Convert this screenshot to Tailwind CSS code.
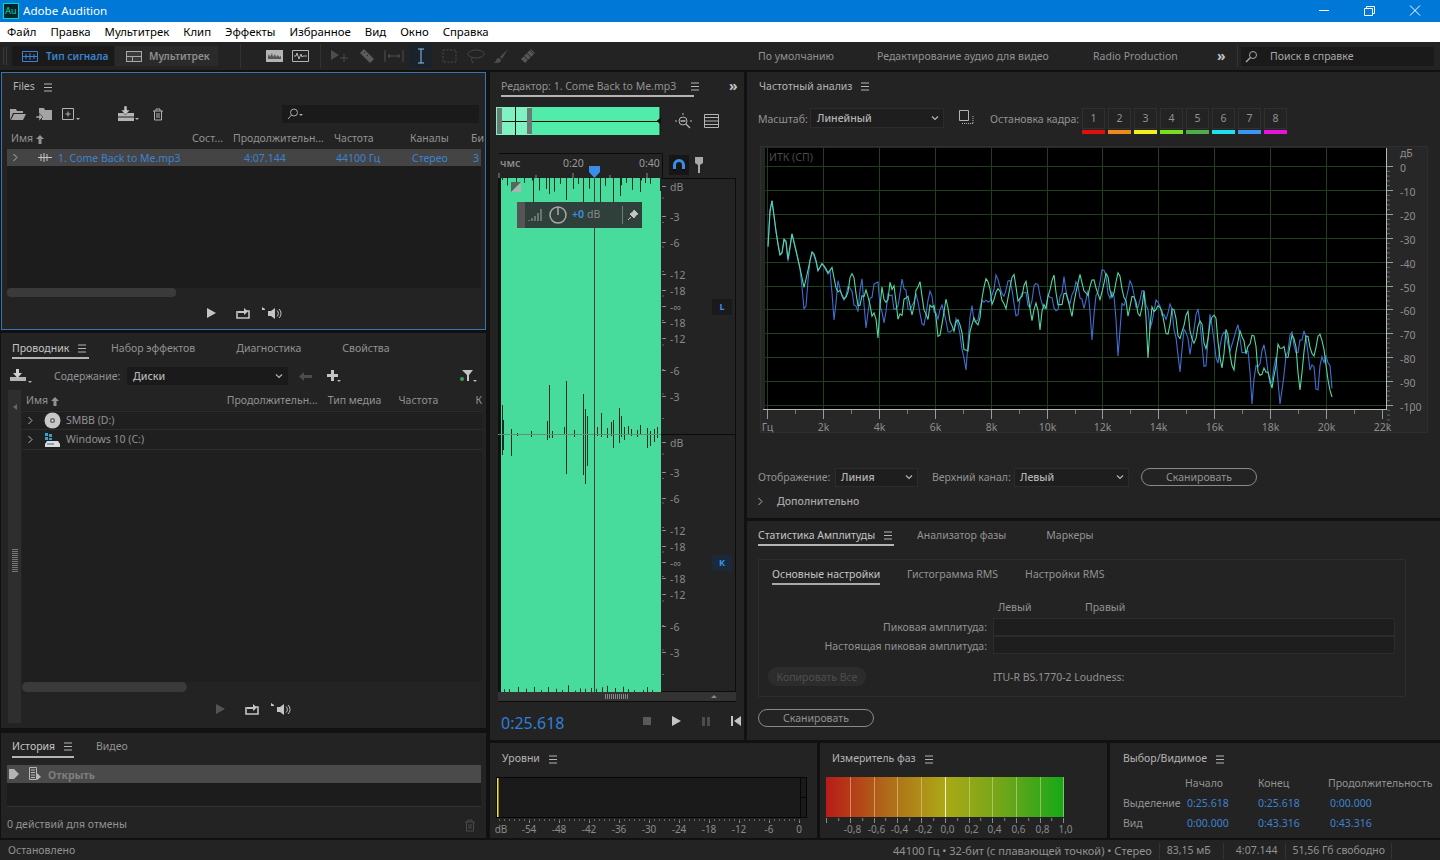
<!DOCTYPE html>
<html lang="ru">
<head>
  <meta charset="UTF-8">
  <title>Adobe Audition</title>
  <script src="https://cdn.jsdelivr.net/npm/@tailwindcss/browser@4"></script>
</head>
<body class="bg-[#111111] font-['Noto_Sans',sans-serif] text-[10.5px] text-[#929292]">

  <!-- shared icons -->
  <svg class="absolute w-0 h-0">
    <symbol id="burger" viewBox="0 0 10 9"><path d="M1 1h8M1 4.500h8M1 8h8" stroke="#b4b4b4" fill="none"/></symbol>
    <symbol id="chev" viewBox="0 0 10 10"><path d="M2 3.500l3 3 3-3" stroke="#b4b4b4" stroke-width="1.2" fill="none"/></symbol>
    <symbol id="expand" viewBox="0 0 7 9"><path d="M1.500 1l3.500 3.500L1.500 8" stroke="#b4b4b4" fill="none"/></symbol>
    <symbol id="sort" viewBox="0 0 8 9"><path d="M4 0l4 4H5.500v5h-3V4H0z" fill="#929292"/></symbol>
    <symbol id="play" viewBox="0 0 12 12"><path d="M2 1l9 5-9 5z" fill="#c4c4c4"/></symbol>
    <symbol id="loop" viewBox="0 0 16 14"><path d="M2 5v7h12V5h-3" stroke="#c4c4c4" stroke-width="1.6" fill="none"/><path d="M3 7V5h6V2l4 3.500L9 9V7z" fill="#c4c4c4"/></symbol>
    <symbol id="speaker" viewBox="0 0 22 14"><path d="M1 1l3 2v1H1z" fill="#c4c4c4"/><path d="M7 5h3l4-3v11l-4-3H7z" fill="#c4c4c4"/><path d="M16 4.500a4 4 0 0 1 0 6M18 3a6 6 0 0 1 0 9" stroke="#c4c4c4" fill="none"/></symbol>
    <symbol id="trash" viewBox="0 0 12 13"><path d="M1 3h10M4 3V1h4v2M2.500 3v9h7V3M5 5v5M7 5v5" stroke="currentColor" fill="none"/></symbol>
  </svg>

  <div class="w-[1440px] h-[860px] flex flex-col overflow-hidden">

    <!-- title bar -->
    <div class="h-[22px] bg-[#0078d7] flex items-center text-white text-[11.6px]">
      <div class="ml-[3px] w-[16px] h-[16px] bg-[#00262b] border border-[#00d8b4] text-[#00d8b4] text-[9px] leading-[14px] text-center">Au</div>
      <span class="ml-[4px]">Adobe Audition</span>
      <svg class="ml-auto" width="125" height="22" viewBox="1315 0 125 22" fill="none" stroke="#fff">
        <path d="M1319 10.500h10M1364.500 8.500h8v7h-8zM1366.500 8.500v-2h8v7h-2M1410 5.500l10 10M1420 5.500l-10 10"/>
      </svg>
    </div>

    <!-- menu -->
    <div class="h-[20px] bg-white flex items-center gap-[14px] pl-[7px] text-[11.4px] text-black">
      <span>Файл</span><span>Правка</span><span>Мультитрек</span><span>Клип</span><span>Эффекты</span><span>Избранное</span><span>Вид</span><span>Окно</span><span>Справка</span>
    </div>

    <!-- toolbar -->
    <div class="h-[28px] bg-[#232323] flex items-center shrink-0 whitespace-nowrap">
      <div class="ml-[3px] w-[4px] h-[18px] border-x border-[#3a3a3a]"></div>
      <div class="ml-[5px] w-[102px] h-[20px] bg-[#1a1a1a] flex items-center pl-[10px] gap-[8px] font-semibold text-[10.2px] text-[#3d82d0]">
        <svg width="16" height="11" viewBox="0 0 16 11" fill="none" stroke="#3d82d0"><path d="M.5.5h15v10H.5zM.5 5.500h15M4 3v5M8 2v7M12 3v5"/></svg>
        <span class="mt-[2px]">Тип сигнала</span>
      </div>
      <div class="ml-[1px] w-[103px] h-[20px] bg-[#2a2a2a] flex items-center pl-[11px] gap-[7px] font-semibold text-[10.2px] text-[#8e8e8e]">
        <svg width="16" height="11" viewBox="0 0 16 11"><path d="M0 0h16v11H0z" fill="#a8a8a8"/><path d="M1 1h14v4H1zM1 6h5v4H1zM7 6h8v4H7z" fill="#3a3a3a"/></svg>
        <span class="mt-[2px]">Мультитрек</span>
      </div>
      <div class="ml-[22px] w-px h-[24px] bg-[#333]"></div>
      <svg class="ml-[25px]" width="17" height="12" viewBox="0 0 17 12"><path d="M0 0h17v12H0z" fill="#b4b4b4"/><path d="M2 9V6l1-2 1 3 2-4 1 4 2-3 1 3 2-2 1 2 2-1v3z" fill="#555"/></svg>
      <svg class="ml-[9px]" width="17" height="12" viewBox="0 0 17 12" fill="none" stroke="#b4b4b4"><path d="M.5.5h16v11H.5z"/><path d="M2 6h2l1-3 2 6 2-5 1 3 1-1h4"/></svg>
      <div class="ml-[11px] w-px h-[24px] bg-[#333]"></div>
      <svg class="ml-[9px]" width="20" height="16" viewBox="0 0 20 16"><path d="M1 2l8 5-8 5z" fill="#4d4d4d"/><path d="M14 6v8M10 10h8" stroke="#4d4d4d"/></svg>
      <svg class="ml-[8px]" width="18" height="18" viewBox="0 0 18 18"><path d="M2 6l4-4 10 10-4 4z" fill="#5a5a5a"/><path d="M6 5l1 1M9 8l1 1" stroke="#232323"/></svg>
      <svg class="ml-[8px]" width="20" height="14" viewBox="0 0 20 14" fill="none" stroke="#505050"><path d="M1 1v12M19 1v12M4 7h12M4 7l2-2M4 7l2 2M16 7l-2-2M16 7l-2 2"/></svg>
      <div class="ml-[5px] w-[23px] h-[24px] bg-[#1a222b] flex items-center justify-center">
        <svg width="8" height="16" viewBox="0 0 8 16" fill="none" stroke="#8cc0e8"><path d="M1 1h6M1 15h6M4 1v14"/></svg>
      </div>
      <svg class="ml-[10px]" width="15" height="14" viewBox="0 0 15 14" fill="none" stroke="#4a4a4a" stroke-dasharray="2 1.500"><path d="M1 1h13v12H1z"/></svg>
      <svg class="ml-[10px]" width="18" height="15" viewBox="0 0 18 15" fill="none" stroke="#4a4a4a"><path d="M9 1c5 0 8 2 8 4s-4 4-8 4-8-2-8-4 4-4 8-4zM5 9c-1 2 0 3 1 5"/></svg>
      <svg class="ml-[8px]" width="16" height="16" viewBox="0 0 16 16"><path d="M15 1L7 9l2 2 6-10zM6 10c-2 0-3 1-3 3l-2 2c3 0 7 0 7-3z" fill="#4d4d4d"/></svg>
      <svg class="ml-[10px]" width="18" height="18" viewBox="0 0 18 18"><path d="M2 12L12 2l4 4L6 16z" fill="#555"/><path d="M5 9l4 4M8 6l4 4M11 3l4 4" stroke="#2a2a2a"/></svg>

      <span class="ml-[221px] mt-[2px] w-[119px]">По умолчанию</span>
      <span class="mt-[2px] w-[216px]">Редактирование аудио для видео</span>
      <span class="mt-[2px] w-[124px]">Radio Production</span>
      <span class="w-[12px] text-[#c4c4c4] font-bold text-[14px] leading-[14px]">»</span>
      <div class="ml-[8px] w-px h-[22px] bg-[#333]"></div>
      <div class="ml-[3px] w-[193px] h-[19px] bg-[#1a1a1a] flex items-center pl-[3px] gap-[12px]">
        <svg width="14" height="13" viewBox="0 0 14 13" fill="none" stroke="#a8a8a8"><circle cx="9" cy="5" r="3.500"/><path d="M6.500 7.500L2 12" stroke-width="1.500"/></svg>
        <span class="mt-[2px] text-[#a8a8a8]">Поиск в справке</span>
      </div>
    </div>

    <!-- workspace -->
    <div class="h-[770px] flex pt-[2px] shrink-0">

      <!-- left column -->
      <div class="w-[487px] pl-[1px] flex flex-col shrink-0">

        <!-- Files -->
        <div class="w-[485px] h-[258px] border border-[#3a74ae] bg-[#232323] flex flex-col shrink-0">
          <div class="h-[27px] pl-[11px] flex items-end pb-[7px] gap-[8px] text-[#b4b4b4] leading-[13px]">
            Files
            <svg class="mb-[1px]" width="10" height="9"><use href="#burger"/></svg>
          </div>
          <div class="h-[28px] flex items-center pl-[8px]">
            <svg width="16" height="13" viewBox="0 0 16 13"><path d="M0 1h6l1 2h6v2H3L0 12z" fill="#a4a4a4"/><path d="M4 6h12l-3 6H1z" fill="#a4a4a4"/></svg>
            <svg class="ml-[10px]" width="17" height="14" viewBox="0 0 17 14"><path d="M3 1h5l1 2h7v10H6V9H3z" fill="#a4a4a4"/><path d="M0 9h3V6l4 4-4 4v-3H0z" fill="#a4a4a4" stroke="#232323" stroke-width=".5"/></svg>
            <svg class="ml-[9px]" width="18" height="14" viewBox="0 0 18 14" fill="none" stroke="#b4b4b4"><path d="M.5 1.500h11v11H.5zM6 4.500v5M3.500 7h5"/><path d="M14 11h4l-2 2z" fill="#b4b4b4" stroke="none"/></svg>
            <svg class="ml-[38px]" width="21" height="16" viewBox="0 0 21 16"><path d="M0 7h16v8H0z" fill="#b4b4b4"/><path d="M0 11h16" stroke="#232323"/><path d="M6 0h3v4h3L7.500 9 3 4h3z" fill="#c4c4c4" stroke="#232323" stroke-width=".5"/><path d="M17 12h4l-2 2z" fill="#b4b4b4"/></svg>
            <svg class="ml-[13px] text-[#b0b0b0]" width="12" height="13"><use href="#trash"/></svg>
            <div class="ml-[118px] w-[197px] h-[18px] bg-[#1a1a1a] flex items-center pl-[5px]">
              <svg width="17" height="12" viewBox="0 0 17 12" fill="none" stroke="#a8a8a8"><circle cx="7" cy="4.500" r="3.500"/><path d="M4.500 7L1 11"/><path d="M12 6h4l-2 2z" fill="#a8a8a8" stroke="none"/></svg>
            </div>
          </div>
          <div class="h-[20px] flex items-center pl-[9px] pt-[2px]">
            <span class="w-[181px] flex items-center gap-[3px]">Имя <svg width="8" height="9"><use href="#sort"/></svg></span>
            <span class="w-[41px]">Сост...</span>
            <span class="w-[101px]">Продолжительн...</span>
            <span class="w-[76px]">Частота</span>
            <span class="w-[61px]">Каналы</span>
            <span>Би</span>
          </div>
          <div class="ml-[5px] mt-[1px] w-[474px] h-[148px] bg-[#1c1c1c] flex flex-col">
            <div class="h-[17px] bg-[#444444] flex items-center pt-[2px] text-[#3d82d0] overflow-hidden">
              <svg class="ml-[5px] mb-[2px]" width="7" height="9"><use href="#expand"/></svg>
              <svg class="ml-[19px] mb-[2px]" width="14" height="9" viewBox="0 0 14 9" fill="none" stroke="#c4c4c4"><path d="M0 4.500h14M3 1v7M6 0v9M9 1v7"/></svg>
              <span class="ml-[6px] w-[186px]">1. Come Back to Me.mp3</span>
              <span class="w-[92px]">4:07.144</span>
              <span class="w-[76px]">44100 Гц</span>
              <span class="w-[61px]">Стерео</span>
              <span>3</span>
            </div>
            <div class="mt-auto h-[9px] bg-[#232323]"><div class="w-[169px] h-[9px] rounded-[4px] bg-[#3a3a3a]"></div></div>
          </div>
          <div class="h-[32px] flex items-center pl-[203px]">
            <svg width="12" height="12"><use href="#play"/></svg>
            <svg class="ml-[18px]" width="16" height="14"><use href="#loop"/></svg>
            <svg class="ml-[10px]" width="22" height="14"><use href="#speaker"/></svg>
          </div>
        </div>

        <!-- Проводник -->
        <div class="mt-[3px] w-[485px] h-[395px] bg-[#232323] flex flex-col shrink-0">
          <div class="h-[29px] flex items-start pl-[11px] pt-[8px] shrink-0">
            <div class="w-[77px] h-[18px] border-b-2 border-[#b4b4b4] flex gap-[8px] text-[#c4c4c4] leading-[14px]">
              Проводник
              <svg class="mt-[3px]" width="10" height="9"><use href="#burger"/></svg>
            </div>
            <span class="ml-[22px] leading-[14px]">Набор эффектов</span>
            <span class="ml-[41px] leading-[14px]">Диагностика</span>
            <span class="ml-[41px] leading-[14px]">Свойства</span>
          </div>
          <div class="h-[28px] flex items-center pl-[9px] shrink-0">
            <svg width="22" height="16" viewBox="0 0 22 16"><path d="M0 9h16v4H0z" fill="#b4b4b4"/><path d="M6 1h3v4h3l-4.500 5L3 5h3z" fill="#d0d0d0"/><path d="M18 13h4l-2 2z" fill="#b4b4b4"/></svg>
            <span class="ml-[22px] mt-[2px] w-[73px]">Содержание:</span>
            <div class="w-[161px] h-[18px] bg-[#1a1a1a] flex items-center pl-[6px] pr-[4px] font-medium text-[#b4b4b4]">
              <span class="mt-[2px]">Диски</span>
              <svg class="ml-auto" width="10" height="10"><use href="#chev"/></svg>
            </div>
            <svg class="ml-[11px]" width="13" height="9" viewBox="0 0 13 9"><path d="M0 4.500L5 0v3h8v3H5v3z" fill="#4c4c4c"/></svg>
            <svg class="ml-[14px]" width="16" height="14" viewBox="0 0 16 14"><path d="M5 1h3v4h4v3H8v4H5V8H1V5h4z" fill="#c4c4c4"/><path d="M11 11h4l-2 2z" fill="#b4b4b4"/></svg>
            <svg class="ml-[118px]" width="17" height="14" viewBox="0 0 17 14"><path d="M2 1h11L9 6v6H7V6z" fill="#c4c4c4"/><circle cx="2" cy="10" r="2" fill="#3aa050"/><path d="M13 11h4l-2 2z" fill="#b4b4b4"/></svg>
          </div>
          <div class="flex-1 flex pl-[7px]">
            <div class="w-[13px] h-[333px] bg-[#2e2e2e] flex flex-col items-center pt-[14px]">
              <div class="w-0 h-0 border-y-[3px] border-y-transparent border-r-[4px] border-r-[#666]"></div>
              <div class="mt-[138px] w-[6px] h-[24px] bg-[repeating-linear-gradient(0deg,#777_0_1px,transparent_1px_2px)]"></div>
            </div>
            <div class="ml-[1px] w-[460px] flex flex-col">
              <div class="h-[20px] flex items-center pl-[4px] pt-[2px] shrink-0">
                <span class="w-[201px] flex items-center gap-[3px]">Имя <svg width="8" height="9"><use href="#sort"/></svg></span>
                <span class="w-[101px]">Продолжительн...</span>
                <span class="w-[71px]">Тип медиа</span>
                <span class="w-[77px]">Частота</span>
                <span>К</span>
              </div>
              <div class="h-[272px] bg-[#1f1f1f] flex flex-col pt-[1px] shrink-0">
                <div class="h-[19px] border-y border-[#2c2c2c] flex items-center">
                  <svg class="ml-[5px]" width="7" height="9"><use href="#expand"/></svg>
                  <svg class="ml-[10px]" width="17" height="17" viewBox="0 0 17 17"><circle cx="8.500" cy="8.500" r="8" fill="#c8c8c8"/><circle cx="8.500" cy="8.500" r="2.500" fill="#666"/><circle cx="8.500" cy="8.500" r="1" fill="#eee"/></svg>
                  <span class="ml-[5px]">SMBB (D:)</span>
                </div>
                <div class="h-[20px] border-b border-[#2c2c2c] flex items-center">
                  <svg class="ml-[5px]" width="7" height="9"><use href="#expand"/></svg>
                  <svg class="ml-[10px]" width="17" height="14" viewBox="0 0 17 14"><path d="M1 0h3v3H1zM5 1h3v3H5zM1 4h3v3H1zM5 5h3v2H5z" fill="#3aa0c8"/><path d="M3 8h11l2 3v3H1v-3z" fill="#dcdcdc"/><path d="M3 11h7" stroke="#2a6a90"/></svg>
                  <span class="ml-[5px]">Windows 10 (C:)</span>
                </div>
              </div>
              <div class="h-[10px] bg-[#232323] shrink-0"><div class="w-[165px] h-[10px] rounded-[5px] bg-[#3a3a3a]"></div></div>
              <div class="h-[33px] flex items-center pl-[192px] shrink-0">
                <svg class="opacity-30" width="12" height="12"><use href="#play"/></svg>
                <svg class="ml-[18px]" width="16" height="14"><use href="#loop"/></svg>
                <svg class="ml-[10px]" width="22" height="14"><use href="#speaker"/></svg>
              </div>
            </div>
          </div>
        </div>

        <!-- История -->
        <div class="mt-[5px] w-[485px] h-[105px] bg-[#232323] flex flex-col shrink-0">
          <div class="h-[32px] flex items-start pl-[11px] pt-[5px] shrink-0">
            <div class="w-[62px] h-[20px] border-b-2 border-[#b4b4b4] flex gap-[8px] text-[#c4c4c4] leading-[17px]">
              История
              <svg class="mt-[4px]" width="10" height="9"><use href="#burger"/></svg>
            </div>
            <span class="ml-[22px] leading-[17px]">Видео</span>
          </div>
          <div class="ml-[6px] w-[474px] h-[42px] bg-[#1c1c1c] border-b border-[#333] shrink-0">
            <div class="h-[18px] bg-[#4a4a4a] flex items-center font-bold text-[#7e7e7e]">
              <svg class="ml-[2px]" width="10" height="10" viewBox="0 0 10 10"><path d="M0 0h5l5 5-5 5H0z" fill="#b4b4b4"/></svg>
              <svg class="ml-[9px]" width="13" height="14" viewBox="0 0 13 14" fill="none" stroke="#b8b8b8"><path d="M1.500.5h7v12h-7zM3 3h4M3 5.500h4M3 8h4M3 10.500h4"/><path d="M9 6v7l4-3z" fill="#b8b8b8" stroke="none"/></svg>
              <span class="ml-[7px] mt-[3px]">Открыть</span>
            </div>
          </div>
          <div class="flex-1 flex items-center pl-[6px] pr-[10px] pt-[5px]">
            <span>0 действий для отмены</span>
            <svg class="ml-auto text-[#4a4a4a]" width="12" height="13"><use href="#trash"/></svg>
          </div>
        </div>
      </div>

      <!-- centre + right -->
      <div class="ml-[3px] w-[950px] flex flex-col shrink-0">
        <div class="h-[668px] flex gap-[3px] shrink-0">

          <!-- editor -->
          <div class="w-[254px] bg-[#232323] flex flex-col shrink-0">
            <div class="h-[28px] flex items-start pl-[11px] pt-[7px] shrink-0">
              <div class="w-[193px] h-[18px] border-b-2 border-[#b4b4b4] flex gap-[14px] leading-[14px] whitespace-nowrap">
                Редактор: 1. Come Back to Me.mp3
                <svg class="mt-[3px] shrink-0" width="10" height="9"><use href="#burger"/></svg>
              </div>
              <span class="ml-[35px] text-[#c4c4c4] font-bold text-[14px] leading-[14px]">»</span>
            </div>
            <div class="mt-[7px] h-[28px] flex items-center pl-[6px] shrink-0">
              <svg width="165" height="28" viewBox="496 107 165 28">
                <path d="M496 107h164v28H496z" fill="#52ecaa"/>
                <path d="M496 107h35v28H496z" fill="#7ff2c2"/>
                <path d="M497 121.500h163M515.500 107v28" stroke="#07140f"/>
                <path d="M497 108h5v26h-5zM527 108h5v26h-5z" fill="#6a7a74"/>
                <path d="M660 107v28M657 121l4-3v6z" fill="#111" stroke="#111"/>
              </svg>
              <svg class="ml-[14px]" width="17" height="17" viewBox="0 0 17 17" fill="none" stroke="#b4b4b4"><circle cx="8" cy="8" r="4"/><path d="M5.500 8h5M11 11l4 4" stroke-width="1.300"/><path d="M8 0v2M0 8h2M16 7v2"/></svg>
              <svg class="ml-[12px]" width="15" height="14" viewBox="0 0 15 14" fill="none" stroke="#b4b4b4"><path d="M.5.5h14v13H.5zM.5 3.500h14M.5 7h14M.5 10.500h14"/></svg>
            </div>
            <div class="mt-[18px] h-[25px] flex shrink-0">
              <svg class="ml-[8px]" width="165" height="25" viewBox="498 153 165 25">
                <path d="M498.500 153.500h164v24" fill="none" stroke="#0c0c0c"/>
                <text x="500" y="167" font-size="10.500" font-weight="600" fill="#8a8a8a">чмс</text>
                <text x="563" y="167" font-size="10.500" fill="#9a9a9a">0:20</text>
                <text x="639" y="167" font-size="10.500" fill="#9a9a9a">0:40</text>
                <path d="M499 178v-5M536 178v-3M573 178v-5M610 178v-3M647 178v-5" stroke="#8a8a8a"/>
                <path d="M589 166h11v6l-5.500 6-5.500-6z" fill="#3a8ee8"/>
              </svg>
              <div class="ml-[6px] mt-[2px] w-[20px] h-[20px] bg-[#161616] flex items-center justify-center">
                <svg width="14" height="14" viewBox="0 0 14 14" fill="none"><path d="M2.500 12V7a4.500 4.500 0 0 1 9 0v5" stroke="#3a8ee8" stroke-width="3"/><path d="M1 11h3v2H1zM10 11h3v2h-3z" fill="#0e0e0e"/></svg>
              </div>
              <svg class="ml-[6px] mt-[4px]" width="8" height="16" viewBox="0 0 8 16"><path d="M0 0h8v6L5 8v8H3V8L0 6z" fill="#a8a8a8"/></svg>
            </div>
            <div class="relative h-[514px] shrink-0 ml-[8px]">
              <svg id="wave" width="238" height="514" viewBox="498 178 238 514"></svg>
              <div class="absolute left-[19px] top-[24px] w-[125px] h-[26px] bg-[#2f3f39] flex items-center">
                <div class="w-[8px] h-full bg-[#555]"></div>
                <svg class="ml-[3px]" width="16" height="14" viewBox="0 0 16 14" stroke="#a8a8a8"><path d="M1 13v-1M4 13v-3M7 13V8M10 13V5M13 13V1"/></svg>
                <svg class="ml-[5px]" width="18" height="18" viewBox="0 0 18 18" fill="none" stroke="#a8a8a8" stroke-width="1.500"><circle cx="9" cy="9" r="8"/><path d="M9 1v8"/></svg>
                <span class="ml-[5px] text-[#3a8ee8] font-semibold">+0</span><span class="ml-[3px] text-[#8a8a8a]">dB</span>
                <div class="ml-[22px] w-px h-[18px] bg-[#777]"></div>
                <svg class="ml-[5px]" width="10" height="10" viewBox="0 0 10 10"><path d="M6 0l4 4-2 1-2 3-4-4 3-2zM3 7L0 10" fill="#c4c4c4" stroke="#c4c4c4"/></svg>
              </div>
              <div class="absolute left-[214px] top-[121px] w-[20px] h-[16px] bg-[#1a1a1a] text-center leading-[16px] text-[9px] font-bold text-[#3a8ee8]">L</div>
              <div class="absolute left-[214px] top-[377px] w-[20px] h-[16px] bg-[#1a2a3a] text-center leading-[16px] text-[9px] font-bold text-[#3a8ee8]">K</div>
            </div>
            <div class="ml-[8px] w-[238px] h-[10px] bg-[#333] border-b border-[#0c0c0c] flex items-center shrink-0">
              <div class="ml-[107px] w-[24px] h-[5px] bg-[repeating-linear-gradient(90deg,#888_0_1px,transparent_1px_2px)]"></div>
              <div class="ml-[82px] w-0 h-0 border-x-[3px] border-x-transparent border-b-[3px] border-b-[#888]"></div>
            </div>
            <div class="h-[38px] flex items-center pl-[11px]">
              <span class="text-[#2f7fd8] text-[16px] leading-[20px] w-[142px] mt-[4px]">0:25.618</span>
              <div class="w-[8px] h-[8px] bg-[#5a5a5a]"></div>
              <svg class="ml-[19px]" width="12" height="12"><use href="#play"/></svg>
              <div class="ml-[20px] w-[8px] h-[9px] border-x-[3px] border-[#4c4c4c]"></div>
              <svg class="ml-[21px]" width="10" height="10" viewBox="0 0 10 10"><path d="M0 0h2v10H0zM10 0v10L3 5z" fill="#c4c4c4"/></svg>
            </div>
          </div>

          <!-- right column -->
          <div class="w-[693px] flex flex-col gap-[3px]">

            <!-- Частотный анализ -->
            <div class="h-[446px] bg-[#232323] flex flex-col shrink-0">
              <div class="h-[28px] pl-[12px] flex items-start pt-[7px] gap-[8px] text-[#b4b4b4] leading-[14px] shrink-0">
                Частотный анализ
                <svg class="mt-[3px]" width="10" height="9"><use href="#burger"/></svg>
              </div>
              <div class="mt-[8px] h-[26px] flex items-start pl-[11px] shrink-0 whitespace-nowrap">
                <span class="mt-[4px] w-[52px]">Масштаб:</span>
                <div class="w-[134px] h-[20px] bg-[#1e1e1e] border border-[#2c2c2c] flex items-center pl-[6px] pr-[3px] font-medium text-[#b4b4b4]">
                  <span class="mt-[2px]">Линейный</span>
                  <svg class="ml-auto" width="10" height="10"><use href="#chev"/></svg>
                </div>
                <svg class="ml-[14px] mt-[2px]" width="16" height="15" viewBox="0 0 16 15" fill="none" stroke="#b4b4b4"><path d="M1.500.5h9v10h-9z"/><path d="M4 13.500h11M15 6v8" stroke-dasharray="1 1"/></svg>
                <span class="ml-[16px] mt-[4px] w-[92px]">Остановка кадра:</span>
                <div class="flex gap-[3px]">
                  <div class="w-[23px]"><div class="h-[21px] border border-[#303030] text-center leading-[19px]">1</div><div class="mt-[1px] h-[4px] bg-[#e01010]"></div></div>
                  <div class="w-[23px]"><div class="h-[21px] border border-[#303030] text-center leading-[19px]">2</div><div class="mt-[1px] h-[4px] bg-[#f08a1a]"></div></div>
                  <div class="w-[23px]"><div class="h-[21px] border border-[#303030] text-center leading-[19px]">3</div><div class="mt-[1px] h-[4px] bg-[#f4ee1e]"></div></div>
                  <div class="w-[23px]"><div class="h-[21px] border border-[#303030] text-center leading-[19px]">4</div><div class="mt-[1px] h-[4px] bg-[#78e01e]"></div></div>
                  <div class="w-[23px]"><div class="h-[21px] border border-[#303030] text-center leading-[19px]">5</div><div class="mt-[1px] h-[4px] bg-[#4caf4a]"></div></div>
                  <div class="w-[23px]"><div class="h-[21px] border border-[#303030] text-center leading-[19px]">6</div><div class="mt-[1px] h-[4px] bg-[#1ee0f0]"></div></div>
                  <div class="w-[23px]"><div class="h-[21px] border border-[#303030] text-center leading-[19px]">7</div><div class="mt-[1px] h-[4px] bg-[#3a96ee]"></div></div>
                  <div class="w-[23px]"><div class="h-[21px] border border-[#303030] text-center leading-[19px]">8</div><div class="mt-[1px] h-[4px] bg-[#e614d8]"></div></div>
                </div>
              </div>
              <div class="mt-[12px] ml-[13px] w-[668px] h-[287px] bg-[#272727] border border-[#2e2e2e] shrink-0">
                <svg id="spectrum" width="666" height="289" viewBox="761 149 666 289"></svg>
              </div>
              <div class="mt-[34px] h-[20px] flex items-center pl-[11px] shrink-0 whitespace-nowrap">
                <span class="mt-[2px] w-[77px]">Отображение:</span>
                <div class="w-[83px] h-[19px] bg-[#1e1e1e] border border-[#2c2c2c] flex items-center pl-[5px] pr-[3px] font-medium text-[#b4b4b4]">
                  <span class="mt-[2px]">Линия</span>
                  <svg class="ml-auto" width="10" height="10"><use href="#chev"/></svg>
                </div>
                <span class="ml-[14px] mt-[2px] w-[82px]">Верхний канал:</span>
                <div class="w-[115px] h-[19px] bg-[#1e1e1e] border border-[#2c2c2c] flex items-center pl-[5px] pr-[3px] font-medium text-[#b4b4b4]">
                  <span class="mt-[2px]">Левый</span>
                  <svg class="ml-auto" width="10" height="10"><use href="#chev"/></svg>
                </div>
                <div class="ml-[12px] w-[116px] h-[18px] rounded-[9px] border border-[#8a8a8a] text-center leading-[16px]">Сканировать</div>
              </div>
              <div class="mt-[5px] h-[18px] flex items-center pl-[10px] font-medium text-[#a8a8a8]">
                <svg width="7" height="9"><use href="#expand"/></svg>
                <span class="ml-[13px] mt-[2px]">Дополнительно</span>
              </div>
            </div>

            <!-- Статистика амплитуды -->
            <div class="h-[219px] bg-[#232323] flex flex-col shrink-0">
              <div class="h-[28px] flex items-start pl-[11px] pt-[7px] shrink-0">
                <div class="w-[136px] h-[18px] border-b-2 border-[#b4b4b4] flex gap-[8px] text-[#c4c4c4] leading-[14px] whitespace-nowrap">
                  Статистика Амплитуды
                  <svg class="mt-[3px]" width="10" height="9"><use href="#burger"/></svg>
                </div>
                <span class="ml-[23px] leading-[14px]">Анализатор фазы</span>
                <span class="ml-[40px] leading-[14px]">Маркеры</span>
              </div>
              <div class="mt-[10px] ml-[11px] w-[648px] h-[138px] border border-[#2d2d2d] flex flex-col shrink-0">
                <div class="h-[26px] flex items-start pl-[13px] pt-[7px] shrink-0">
                  <div class="w-[108px] h-[18px] border-b-2 border-[#a8a8a8] text-[#c4c4c4] leading-[14px] whitespace-nowrap">Основные настройки</div>
                  <span class="ml-[27px] leading-[14px]">Гистограмма RMS</span>
                  <span class="ml-[27px] leading-[14px]">Настройки RMS</span>
                </div>
                <div class="mt-[11px] h-[21px] flex items-center pl-[239px] shrink-0">
                  <span class="w-[87px]">Левый</span>
                  <span>Правый</span>
                </div>
                <div class="h-[18px] flex items-center shrink-0">
                  <span class="mt-[2px] w-[228px] text-right">Пиковая амплитуда:</span>
                  <div class="ml-[6px] w-[402px] h-[18px] bg-[#1e1e1e] border border-[#2c2c2c]"></div>
                </div>
                <div class="h-[18px] flex items-center shrink-0">
                  <span class="mt-[4px] w-[228px] text-right">Настоящая пиковая амплитуда:</span>
                  <div class="ml-[6px] w-[402px] h-[18px] bg-[#1e1e1e] border border-[#2c2c2c]"></div>
                </div>
                <div class="mt-[13px] h-[19px] flex items-center pl-[9px] shrink-0">
                  <div class="w-[98px] h-[19px] rounded-[9px] bg-[#2c2c2c] text-center leading-[20px] text-[#4e4e4e]">Копировать Все</div>
                  <span class="ml-[127px] mt-[2px]">ITU-R BS.1770-2 Loudness:</span>
                </div>
              </div>
              <div class="mt-[12px] ml-[11px] w-[116px] h-[18px] rounded-[9px] border border-[#8a8a8a] text-center leading-[16px]">Сканировать</div>
            </div>
          </div>
        </div>

        <!-- meters -->
        <div class="mt-[3px] h-[95px] flex gap-[3px]">
          <div class="w-[327px] bg-[#232323] flex flex-col">
            <div class="h-[30px] pl-[12px] pt-[2px] flex items-center gap-[8px] text-[#b4b4b4]">
              Уровни
              <svg width="10" height="9"><use href="#burger"/></svg>
            </div>
            <svg id="levels" width="327" height="65" viewBox="490 773 327 65"></svg>
          </div>
          <div class="w-[287px] bg-[#232323] flex flex-col">
            <div class="h-[30px] pl-[12px] pt-[2px] flex items-center gap-[8px] text-[#b4b4b4]">
              Измеритель фаз
              <svg width="10" height="9"><use href="#burger"/></svg>
            </div>
            <svg id="phase" width="287" height="65" viewBox="820 773 287 65">
              <defs>
                <linearGradient id="phaseGrad">
                  <stop offset="0" stop-color="#b81c18"/><stop offset=".25" stop-color="#b0681a"/><stop offset=".5" stop-color="#aca816"/><stop offset=".75" stop-color="#6ea61a"/><stop offset="1" stop-color="#16a818"/>
                </linearGradient>
              </defs>
              <rect x="826" y="777" width="238" height="40" fill="url(#phaseGrad)"/>
            </svg>
          </div>
          <div class="flex-1 bg-[#232323] flex flex-col pl-[13px]">
            <div class="h-[30px] pt-[2px] flex items-center gap-[8px] text-[#b4b4b4]">
              Выбор/Видимое
              <svg width="10" height="9"><use href="#burger"/></svg>
            </div>
            <div class="mt-[1px] grid grid-cols-[62px_73px_70px_1fr] grid-rows-[20px_19px_21px] items-center whitespace-nowrap">
              <span></span><span>Начало</span><span>Конец</span><span>Продолжительность</span>
              <span>Выделение</span><span class="pl-[2px] text-[#3d82d0]">0:25.618</span><span class="text-[#3d82d0]">0:25.618</span><span class="pl-[2px] text-[#3d82d0]">0:00.000</span>
              <span>Вид</span><span class="pl-[2px] text-[#3d82d0]">0:00.000</span><span class="text-[#3d82d0]">0:43.316</span><span class="pl-[2px] text-[#3d82d0]">0:43.316</span>
            </div>
          </div>
        </div>
      </div>
    </div>

    <!-- status bar -->
    <div class="h-[20px] bg-[#232323] flex items-center pl-[8px] pt-[2px]">
      <span>Остановлено</span>
      <span class="ml-auto text-[11px] whitespace-nowrap">44100 Гц • 32-бит (с плавающей точкой) • Стерео</span>
      <div class="ml-[7px] w-px h-[16px] bg-[#333]"></div>
      <span class="ml-[7px] whitespace-nowrap">83,15 мБ</span>
      <div class="ml-[12px] w-px h-[16px] bg-[#333]"></div>
      <span class="ml-[12px]">4:07.144</span>
      <div class="ml-[7px] w-px h-[16px] bg-[#333]"></div>
      <span class="ml-[7px] whitespace-nowrap">51,56 Гб свободно</span>
      <div class="ml-[6px] mr-[48px] w-px h-[16px] bg-[#333]"></div>
    </div>
  </div>

  <script>
    const NS = "http://www.w3.org/2000/svg";

    function add(svg, tag, attrs, text) {
      const el = document.createElementNS(NS, tag);
      for (const k in attrs) el.setAttribute(k, attrs[k]);
      if (text !== undefined) el.textContent = text;
      svg.appendChild(el);
      return el;
    }

    // small repeatable random, so every render gives the same picture
    let seed = 7;
    function rnd() {
      seed = (seed * 16807) % 2147483647;
      return seed / 2147483647;
    }

    // --- waveform ---
    const wave = document.getElementById("wave");
    add(wave, "rect", { x: 501, y: 178, width: 160, height: 514, fill: "#48dc9c" });
    add(wave, "rect", { x: 498, y: 178, width: 3, height: 514, fill: "#101010" });
    let d = "";
    for (let x = 502; x < 661; x += 4 + Math.floor(rnd() * 7)) {
      d += `M${x}.5 178v${2 + rnd() * rnd() * 14}`;
      d += `M${x + 2}.5 692v-${1 + rnd() * 6}`;
    }
    // loud hits around the top edge
    [[533, 27], [549, 16], [566, 22], [583, 24], [600, 40], [613, 26], [620, 18], [640, 14]].forEach(s => {
      d += `M${s[0]}.5 178v${s[1]}`;
    });
    // sparse hits around the middle of the file: x, top, bottom
    [[502, 405, 455], [503, 420, 450], [511, 429, 456], [517, 433, 436], [531, 431, 437], [547, 421, 440], [549, 385, 438],
     [552, 431, 438], [566, 381, 474], [564, 427, 435], [574, 430, 437], [583, 394, 475], [585, 409, 484], [587, 416, 466],
     [597, 427, 436], [601, 413, 437], [607, 428, 438], [611, 422, 436], [613, 420, 448], [619, 408, 443], [621, 416, 437],
     [624, 427, 440], [628, 426, 434], [631, 429, 436], [637, 430, 437], [640, 425, 435], [647, 428, 448], [650, 431, 446],
     [654, 429, 442], [657, 427, 438]].forEach(s => {
      d += `M${s[0]}.5 ${s[1]}V${s[2]}`;
    });
    add(wave, "path", { d: d, stroke: "#123024", fill: "none" });
    add(wave, "path", { d: "M498 434.500h163", stroke: "#5f8f78" });
    add(wave, "path", { d: "M594.500 178v514", stroke: "#4a4038" });
    add(wave, "path", { d: "M511 192l10-10v10z", fill: "#a8b8b0" });
    add(wave, "path", { d: "M511 192v-10h10z", fill: "#4c6a5c" });
    add(wave, "path", { d: "M661.500 178.500h74v513h-74M661 434.500h75", fill: "none", stroke: "#0c0c0c" });

    const dbMarks = [["dB", 8], ["-3", 38], ["-6", 64], ["-12", 96], ["-18", 112], ["-∞", 128], ["-18", 144], ["-12", 160], ["-6", 192], ["-3", 218]];
    [178, 434].forEach(top => {
      dbMarks.forEach(m => {
        add(wave, "text", { x: 670, y: top + m[1] + 5, "font-size": 10.5, fill: "#8a8a8a" }, m[0]);
        add(wave, "path", { d: `M662 ${top + m[1] + 0.5}h4`, stroke: "#8a8a8a" });
      });
      for (let i = 0; i < 10; i++) add(wave, "path", { d: `M662 ${top + 20 + i * 24.5}h2`, stroke: "#666" });
    });

    // --- spectrum ---
    const spec = document.getElementById("spectrum");
    add(spec, "rect", { x: 765, y: 150, width: 621, height: 261, fill: "#000" });
    for (let i = 0; i <= 11; i++) {
      const x = Math.round(767 + i * 55.9) + 0.5;
      if (i < 11) add(spec, "path", { d: `M${x} 150v261`, stroke: "#1f401f" });
      add(spec, "text", { x: x, y: 433, "font-size": 10.5, "text-anchor": "middle", fill: "#8e8e8e" }, i ? i * 2 + "k" : "Гц");
      add(spec, "path", { d: `M${x} 411v10`, stroke: "#9a9a9a" });
      add(spec, "path", { d: `M${x + 28} 411v5`, stroke: "#7a7a7a" });
    }
    for (let i = 0; i <= 10; i++) {
      const y = Math.round(168 + i * 23.9) + 0.5;
      add(spec, "path", { d: `M765 ${y}h621`, stroke: "#1f401f" });
      add(spec, "path", { d: `M1387 ${y}h6`, stroke: "#9a9a9a" });
      for (let j = 1; j < 5; j++) add(spec, "path", { d: `M1387 ${y + j * 4.8}h3`, stroke: "#666" });
      add(spec, "text", { x: 1400, y: y + 5, "font-size": 10.5, fill: "#8e8e8e" }, i ? "-" + i * 10 : "0");
    }
    add(spec, "text", { x: 1400, y: 159, "font-size": 10.5, fill: "#8e8e8e" }, "дБ");
    add(spec, "path", { d: "M763 411.500h624M1386.500 150v261", stroke: "#b8b8b8", fill: "none" });
    add(spec, "text", { x: 769, y: 163, "font-size": 10.5, fill: "#4a4a4a" }, "ИТК (СП)");

    const env = [[768, 248], [771, 196], [777, 240], [781, 262], [785, 236], [788, 262], [792, 235], [798, 262], [804, 288], [812, 255], [815, 258], [818, 272], [822, 266], [828, 275], [832, 268], [838, 300], [850, 292], [870, 300], [900, 300], [930, 310], [950, 325], [966, 340], [990, 292], [1020, 297], [1050, 302], [1080, 296], [1100, 284], [1130, 300], [1160, 312], [1180, 335], [1200, 330], [1230, 345], [1250, 348], [1270, 380], [1290, 345], [1310, 352], [1325, 345], [1332, 405]];
    function envAt(x) {
      for (let i = 1; i < env.length; i++) {
        if (x <= env[i][0]) {
          const t = (x - env[i - 1][0]) / (env[i][0] - env[i - 1][0]);
          return env[i - 1][1] + (env[i][1] - env[i - 1][1]) * t;
        }
      }
      return env[env.length - 1][1];
    }
    // notches: the places where one trace falls far below the other
    function trace(phase, color, notches) {
      let pts = [];
      for (let x = 768; x <= 1332; x += 2) {
        const amp = x < 838 ? 1 : 8 + 8 * rnd();
        let y = envAt(x) + amp * (Math.sin(x * 0.47 + phase) + 0.6 * Math.sin(x * 0.19 + phase * 2)) + (x > 838 ? (rnd() - 0.5) * 10 : 0);
        notches.forEach(n => {
          const dist = Math.abs(x - n[0]);
          if (dist < 4) y = y + (n[1] - y) * (1 - dist / 4);
        });
        pts.push(x + "," + Math.min(y, 407).toFixed(1));
      }
      add(spec, "polyline", { points: pts.join(" "), fill: "none", stroke: color, "stroke-width": 1.1 });
    }
    trace(1.3, "#3f6fd0", [[805, 318], [834, 322], [866, 330], [966, 372], [1092, 342], [1118, 358], [1180, 374], [1205, 378], [1252, 406], [1280, 406], [1317, 406]]);
    trace(0, "#52d8a4", [[878, 340], [966, 352], [1040, 332], [1148, 360], [1222, 370], [1300, 392]]);

    // --- level meter ---
    const lev = document.getElementById("levels");
    add(lev, "rect", { x: 496.500, y: 777.500, width: 310, height: 40, fill: "#1a1a1a", stroke: "#050505" });
    add(lev, "path", { d: "M800.500 778v39M800 797.500h7", stroke: "#050505" });
    add(lev, "rect", { x: 497, y: 778, width: 1.5, height: 39, fill: "#f4e81a" });
    const levLabels = ["dB", "-54", "-48", "-42", "-36", "-30", "-24", "-18", "-12", "-6", "0"];
    levLabels.forEach((t, i) => {
      const x = i ? 499 + i * 30 : 501;
      add(lev, "text", { x: x, y: 833, "font-size": 10, "text-anchor": "middle", fill: "#8a8a8a" }, t);
      if (i) add(lev, "path", { d: `M${x + 0.5} 819v4`, stroke: "#8a8a8a" });
    });
    for (let x = 499; x < 800; x += 5) add(lev, "path", { d: `M${x + 0.5} 819v2`, stroke: "#666" });

    // --- phase meter ---
    const ph = document.getElementById("phase");
    ["-0,8", "-0,6", "-0,4", "-0,2", "0,0", "0,2", "0,4", "0,6", "0,8", "1,0"].forEach((t, i) => {
      const x = Math.round(850 + i * 23.7) + 0.5;
      add(ph, "path", { d: `M${x} 777v40`, stroke: i === 4 ? "#f0f0d8" : "#e8e0a0", "stroke-opacity": i === 4 ? 1 : 0.5 });
      add(ph, "path", { d: `M${x} 818v5M${x - 11.8} 818v3`, stroke: "#8a8a8a" });
      add(ph, "text", { x: x + 2, y: 833, "font-size": 10, "text-anchor": "middle", fill: "#8a8a8a" }, t);
    });
    add(ph, "path", { d: "M826.500 818v5", stroke: "#8a8a8a" });
  </script>
</body>
</html>
